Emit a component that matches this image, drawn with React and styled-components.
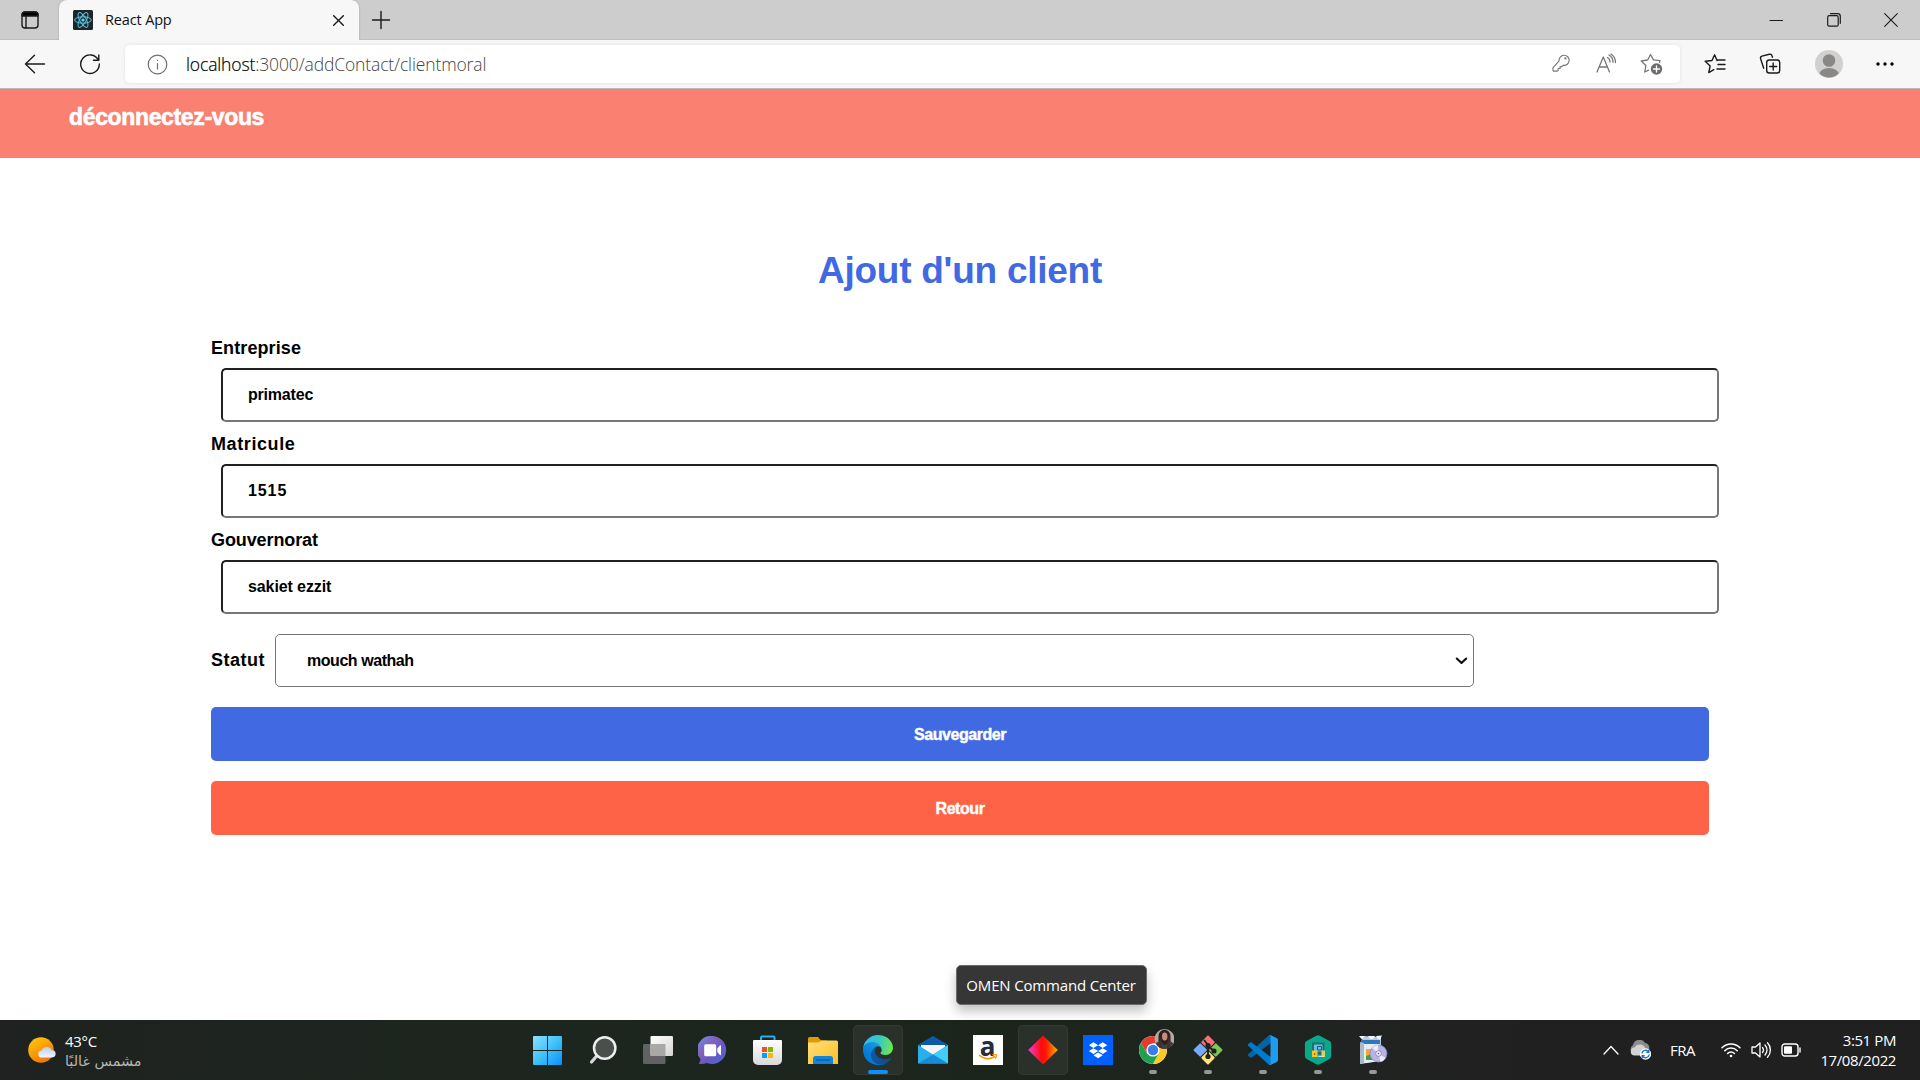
import React from "react";
import styled, { createGlobalStyle } from "styled-components";

const GlobalStyle = createGlobalStyle`
  * { box-sizing: border-box; }
  body { margin: 0; background: #fff; overflow: hidden; }
  svg { display: block; flex: none; }
`;

const ui = `"Open Sans", "Noto Sans", sans-serif`;
const gothic = `"Liberation Sans", Arial, sans-serif`;

const Screen = styled.div`
  width: 1920px;
  height: 1080px;
  display: flex;
  flex-direction: column;
  overflow: hidden;
  font-family: ${ui};
`;

/* ---------- browser chrome ---------- */
const TabStrip = styled.div`
  height: 40px;
  flex: none;
  display: flex;
  background: #cdcdcd;
  box-shadow: inset 0 -1px 0 #bdbdbd;
`;
const TabActions = styled.div`
  width: 59px;
  padding: 11px 0 0 21px;
`;
const Tab = styled.div`
  width: 300px;
  height: 40px;
  display: flex;
  align-items: center;
  padding: 0 15px 0 14px;
  background: #f7f7f7;
  border-radius: 8px 8px 0 0;
  box-shadow: 0 0 2px rgba(0, 0, 0, 0.25);
  clip-path: inset(-2px -2px 0 -2px);
`;
const TabTitle = styled.span`
  flex: 1;
  margin-left: 12px;
  font-size: 14.5px;
  line-height: 20px;
  letter-spacing: -0.15px;
  color: #111;
`;
const NewTab = styled.div`
  flex: 1;
  padding: 10px 0 0 12px;
`;
const WindowButtons = styled.div`
  display: flex;
  align-items: center;
  gap: 43px;
  padding-right: 22px;
`;
const Toolbar = styled.div`
  height: 49px;
  flex: none;
  display: flex;
  align-items: center;
  background: #f7f7f7;
  border-bottom: 1px solid #b9b9b9;
  padding: 0 24px;
`;
const NavButtons = styled.div`
  width: 101px;
  display: flex;
  gap: 33px;
`;
const AddressBar = styled.div`
  width: 1555px;
  height: 38px;
  display: flex;
  align-items: center;
  padding: 0 17px 0 22px;
  background: #fff;
  border-radius: 5px;
  box-shadow: 0 0 4px rgba(0, 0, 0, 0.09);
`;
const Url = styled.span`
  flex: 1;
  margin-left: 18px;
  font-size: 17.5px;
  font-weight: 300;
  letter-spacing: -0.13px;
  line-height: 24px;
  color: #444;
  b { font-weight: 300; color: #000; -webkit-text-stroke: 0.2px #000; }
`;
const AddressActions = styled.div`
  display: flex;
  gap: 23px;
`;
const ToolbarActions = styled.div`
  flex: 1;
  display: flex;
  align-items: center;
  justify-content: space-between;
  padding: 0 2px 0 24px;
`;

/* ---------- page ---------- */
const Page = styled.main`
  flex: 1;
  font-family: ${gothic};
  font-weight: 700;
`;
const NavBar = styled.nav`
  height: 69px;
  padding: 15px 69px;
  background: #fa8072;
`;
const Logout = styled.a`
  display: inline-block;
  font-size: 23px;
  line-height: 26px;
  letter-spacing: -0.35px;
  color: #fff;
  -webkit-text-stroke: 0.6px #fff;
`;
const Form = styled.form`
  width: 1498px;
  margin: 0 auto;
  padding-top: 89px;
`;
const Heading = styled.h1`
  margin: 0 0 31px;
  height: 48px;
  text-align: center;
  font-size: 37px;
  letter-spacing: -0.25px;
  line-height: 48px;
  color: #4169e1;
`;
const Field = styled.div`
  height: 96px;
`;
const Label = styled.label`
  display: block;
  height: 42px;
  padding-top: 12px;
  font-size: 18px;
  line-height: 20px;
  letter-spacing: ${(p) => p.$spacing || 0}px;
  color: #000;
`;
const Input = styled.input`
  display: block;
  width: 1498px;
  height: 54px;
  margin: 0 0 0 10px;
  padding: 0 25px;
  border: 2px inset #767676;
  border-radius: 5px;
  background: #fff;
  font: 700 16px ${gothic};
  letter-spacing: ${(p) => p.$spacing || 0}px;
  color: #000;
`;
const StatusRow = styled.div`
  display: flex;
  align-items: center;
  height: 53px;
  margin: 20px 0;
`;
const StatusLabel = styled.label`
  width: 64px;
  font-size: 18px;
  letter-spacing: 0.5px;
  padding-bottom: 1px;
`;
const SelectBox = styled.div`
  width: 1199px;
  height: 53px;
  display: flex;
  align-items: center;
  padding-right: 5px;
  border: 1px solid #767676;
  border-radius: 5px;
  background: #fff;
`;
const Select = styled.select`
  flex: 1;
  height: 51px;
  padding: 0 0 0 31px;
  border: 0;
  appearance: none;
  background: transparent;
  font: 700 16px ${gothic};
  letter-spacing: -0.45px;
  color: #000;
`;
const Button = styled.button`
  display: block;
  width: 100%;
  height: 54px;
  margin-bottom: 20px;
  padding: 1px 0 0;
  border: 0;
  border-radius: 5px;
  background: ${(p) => p.$color};
  font: 700 16px ${gothic};
  letter-spacing: -0.45px;
  color: #fff;
  -webkit-text-stroke: 0.4px #fff;
`;

/* ---------- taskbar ---------- */
const Taskbar = styled.footer`
  height: 60px;
  flex: none;
  display: flex;
  align-items: center;
  background: linear-gradient(90deg, #1f2220 0%, #1d251f 20%, #1c251c 55%, #202321 70%, #202020 80%);
  color: #fff;
`;
const Weather = styled.div`
  width: 520px;
  display: flex;
  align-items: center;
  padding-left: 28px;
  gap: 9px;
`;
const WeatherText = styled.div`
  display: flex;
  flex-direction: column;
  padding-top: 1px;
  font-size: 15px;
  line-height: 20px;
  letter-spacing: -0.3px;
`;
const Forecast = styled.span`
  font-family: "DejaVu Sans", sans-serif;
  font-size: 14.3px;
  letter-spacing: 0;
  color: #b5b6b5;
`;
const Apps = styled.div`
  display: flex;
  flex: 1;
`;
const AppCell = styled.div`
  position: relative;
  width: 50px;
  height: 50px;
  margin: 0 2.5px;
  display: flex;
  align-items: center;
  justify-content: center;
  border-radius: 5px;
  background: ${(p) => (p.$active ? "#2a312b" : "transparent")};
  box-shadow: ${(p) => (p.$active ? "inset 0 0 0 1px #343b35" : "none")};
`;
const Indicator = styled.span`
  position: absolute;
  bottom: 1px;
  left: ${(p) => (p.$wide ? 15 : 21)}px;
  width: ${(p) => (p.$wide ? 20 : 8)}px;
  height: 4px;
  border-radius: 2px;
  background: ${(p) => (p.$wide ? "#0a91fb" : "#969896")};
`;
const Tooltip = styled.div`
  position: absolute;
  left: -62px;
  bottom: 70px;
  width: 191px;
  height: 40px;
  display: flex;
  align-items: center;
  justify-content: center;
  padding-bottom: 1px;
  background: #363636;
  border: 1px solid #6b6b6b;
  border-radius: 5px;
  box-shadow: 0 6px 12px rgba(0, 0, 0, 0.25);
  font-size: 15px;
  white-space: nowrap;
  letter-spacing: -0.17px;
`;
const Tray = styled.div`
  display: flex;
  align-items: center;
  padding-right: 24px;
  font-size: 15px;
`;
const Language = styled.span`
  width: 51px;
  margin-left: 19px;
  letter-spacing: -0.5px;
`;
const StatusIcons = styled.div`
  display: flex;
  align-items: center;
  gap: 10px;
`;
const Clock = styled.div`
  width: 95px;
  display: flex;
  flex-direction: column;
  align-items: flex-end;
  line-height: 20px;
  letter-spacing: -0.4px;
`;

const Stroke = ({ w = 20, h = w, box, color = "#1b1b1b", sw = 1.4, children }) => (
  <svg width={w} height={h} viewBox={box || `0 0 ${w} ${h}`} fill="none" stroke={color} strokeWidth={sw} strokeLinecap="round" strokeLinejoin="round">
    {children}
  </svg>
);

const TabActionsIcon = () => (
  <Stroke w={18} sw={1.4}>
    <rect x="1" y="1" width="16" height="16" rx="3" />
    <path d="M5 5v12" />
    <path d="M1 5V4a3 3 0 0 1 3-3h10a3 3 0 0 1 3 3v1z" fill="#000" />
  </Stroke>
);
const ReactIcon = () => (
  <svg width="20" height="20" viewBox="0 0 20 20" fill="none" stroke="#56c8e2" strokeWidth="1">
    <rect width="20" height="20" rx="1.5" fill="#20232a" stroke="none" />
    <ellipse cx="10" cy="10" rx="8.3" ry="3.2" />
    <ellipse cx="10" cy="10" rx="8.3" ry="3.2" transform="rotate(60 10 10)" />
    <ellipse cx="10" cy="10" rx="8.3" ry="3.2" transform="rotate(120 10 10)" />
    <circle cx="10" cy="10" r="1.6" fill="#61dafb" stroke="none" />
  </svg>
);

const WindowsIcon = () => (
  <svg width="29" height="29" viewBox="0 0 29 29">
    <defs>
      <linearGradient id="win" x1="0" y1="0" x2="29" y2="29" gradientUnits="userSpaceOnUse">
        <stop stopColor="#8be0ff" /><stop offset=".5" stopColor="#3fc2fb" /><stop offset="1" stopColor="#0c8ff5" />
      </linearGradient>
    </defs>
    <path fill="url(#win)" d="M1 0h13v14H0V1a1 1 0 0 1 1-1zM15 0h13a1 1 0 0 1 1 1v13H15zM0 15h14v14H1a1 1 0 0 1-1-1zM15 15h14v13a1 1 0 0 1-1 1H15z" />
  </svg>
);
const SearchIcon = () => (
  <svg width="28" height="29" viewBox="0 0 28 29" fill="none">
    <path d="M8.5 19L2.5 26" stroke="#d6d9de" strokeWidth="3.2" strokeLinecap="round" />
    <circle cx="15.7" cy="12" r="10.7" fill="#4b4f4c" stroke="#eceef0" strokeWidth="2.5" />
  </svg>
);
const TaskViewIcon = () => (
  <svg width="30" height="28" viewBox="0 0 30 28">
    <defs>
      <linearGradient id="tv" x1="0" y1="0" x2="1" y2="1"><stop stopColor="#fff" /><stop offset="1" stopColor="#d5d5d5" /></linearGradient>
    </defs>
    <rect y="8" width="22.5" height="20" rx="1.2" fill="#626163" />
    <rect x="7.5" y="0" width="22.5" height="20" rx="1.2" fill="url(#tv)" />
    <path d="M7.5 8h15v12h-14a1 1 0 0 1-1-1z" fill="#a8a8a6" />
  </svg>
);
const ChatIcon = () => (
  <svg width="29" height="29" viewBox="0 0 29 29">
    <defs>
      <linearGradient id="chat" x1="2" y1="4" x2="24" y2="26" gradientUnits="userSpaceOnUse"><stop stopColor="#7183dc" /><stop offset=".3" stopColor="#8462bb" /><stop offset=".6" stopColor="#6a59c2" /><stop offset="1" stopColor="#5562d0" /></linearGradient>
    </defs>
    <path d="M14.5 0A14 14 0 1 1 9 27c-3 1-6 1-8.400.8 1.300-1.500 1.900-3 1.700-5A14 14 0 0 1 14.500 0z" fill="url(#chat)" />
    <rect x="6.200" y="8.200" width="12" height="12" rx="1.500" fill="#fff" />
    <path d="M19.300 12.500l2.700-3c.6-.5 1-.4 1 .4v8.600c0 .8-.4.9-1 .4l-2.700-3z" fill="#fff" />
  </svg>
);
const StoreIcon = () => (
  <svg width="29" height="30" viewBox="0 0 29 30">
    <defs><linearGradient id="store" x1="0" y1="0" x2="0" y2="1"><stop stopColor="#fff" /><stop offset="1" stopColor="#d9d9d9" /></linearGradient></defs>
    <path d="M8 6.500V2.500a1 1 0 0 1 1-1h11.500a1 1 0 0 1 1 1v4" fill="none" stroke="#1cb5ea" strokeWidth="2" />
    <path d="M1 5h27a1 1 0 0 1 1 1v19a5 5 0 0 1-5 5H5a5 5 0 0 1-5-5V6a1 1 0 0 1 1-1z" fill="url(#store)" />
    <path d="M9 12h5v5H9z" fill="#f25022" /><path d="M15 12h5v5h-5z" fill="#7fba00" />
    <path d="M9 18h5v5H9z" fill="#00a4ef" /><path d="M15 18h5v5h-5z" fill="#ffb900" />
  </svg>
);
const ExplorerIcon = () => (
  <svg width="30" height="27" viewBox="0 0 30 27">
    <defs>
      <linearGradient id="fold" x1="0" y1="0" x2="1" y2="1"><stop stopColor="#ffe07a" /><stop offset="1" stopColor="#fbbf24" /></linearGradient>
    </defs>
    <path d="M0 1.500A1.500 1.500 0 0 1 1.500 0H10l3 3.500h6V10H0z" fill="#dd9b05" />
    <path d="M0 5.500h11l2-2h15.500A1.500 1.500 0 0 1 30 5v22H0z" fill="url(#fold)" />
    <path d="M5 27v-5.500a2.500 2.500 0 0 1 2.500-2.500h15a2.500 2.500 0 0 1 2.500 2.500V27z" fill="#1584d8" />
    <path d="M8 23h14" stroke="#0a5da6" strokeWidth="1.300" />
  </svg>
);
const EdgeIcon = () => (
  <svg width="30" height="30" viewBox="0 0 256 256">
    <defs>
      <linearGradient id="e1" x1="63" y1="177" x2="241" y2="177" gradientUnits="userSpaceOnUse"><stop stopColor="#0c59a4" /><stop offset="1" stopColor="#114a8b" /></linearGradient>
      <linearGradient id="e2" x1="157" y1="99" x2="46" y2="221" gradientUnits="userSpaceOnUse"><stop stopColor="#1b9de2" /><stop offset=".16" stopColor="#1595df" /><stop offset=".67" stopColor="#0680d7" /><stop offset="1" stopColor="#0078d4" /></linearGradient>
      <linearGradient id="e3" x1="10" y1="60" x2="240" y2="110" gradientUnits="userSpaceOnUse"><stop stopColor="#35b9ee" /><stop offset=".5" stopColor="#36c6c9" /><stop offset="1" stopColor="#68e653" /></linearGradient>
    </defs>
    <path fill="url(#e1)" d="M235.700 195.500a93.700 93.700 0 0 1-10.600 4.700 101.900 101.900 0 0 1-35.900 6.400c-47.300 0-88.500-32.500-88.500-74.300a31.500 31.500 0 0 1 16.400-27.300c-42.800 1.800-53.800 46.400-53.800 72.500 0 74 68.100 81.400 82.800 81.400 7.900 0 19.800-2.300 27-4.600l1.300-.4a128.300 128.300 0 0 0 66.600-52.800 4 4 0 0 0-5.300-5.600z" />
    <path fill="url(#e2)" d="M105.700 241.400a79.200 79.200 0 0 1-22.700-21.300 80.700 80.700 0 0 1 29.500-120c3.200-1.500 8.500-4.100 15.600-4a32.400 32.400 0 0 1 25.700 13 31.900 31.900 0 0 1 6.300 18.700c0-.2 24.500-79.600-80-79.600-43.900 0-80 41.700-80 78.200a130.200 130.200 0 0 0 12.100 56 128 128 0 0 0 156.400 67 75.500 75.500 0 0 1-62.800-8z" />
    <path fill="url(#e3)" d="M152.300 148.900c-.9 1-3.400 2.500-3.400 5.600 0 2.600 1.700 5.100 4.700 7.200 14.300 10 41.400 8.600 41.500 8.600a59.600 59.600 0 0 0 30.300-8.300 61.400 61.400 0 0 0 30.400-52.900c.3-22.400-8-37.300-11.300-43.900C223.500 23.900 177.700 0 128 0A128 128 0 0 0 0 126.200c.5-36.500 36.800-66 80-66 3.500 0 23.500.3 42 10.100 16.300 8.600 24.900 18.900 30.800 29.200 6.200 10.700 7.300 24.100 7.300 29.500s-2.700 13.300-7.800 19.900z" />
  </svg>
);
const MailIcon = () => (
  <svg width="30" height="28" viewBox="0 0 30 28">
    <path d="M15 0L29.500 8.500 30 12H0l.5-3.500z" fill="#0a5ca8" />
    <path d="M3 9h24v11H3z" fill="#f5f5f5" />
    <path d="M0 9l15 9.500L30 9v17.500a1 1 0 0 1-1 1H1a1 1 0 0 1-1-1z" fill="#28b0ec" />
    <path d="M30 9v18.500L15 18.500z" fill="#42ccf6" />
    <path d="M0 27.500l15-9 15 9z" fill="#198cd8" />
  </svg>
);
const AmazonTile = styled.div`
  width: 30px;
  height: 30px;
  display: flex;
  flex-direction: column;
  align-items: center;
  justify-content: flex-end;
  padding-bottom: 4px;
  background: #fff;
`;
const AmazonGlyph = styled.span`
  margin-bottom: -9px;
  font: 700 26px/34px "Open Sans", sans-serif;
  color: #232f3e;
`;
const AmazonIcon = () => (
  <AmazonTile>
    <AmazonGlyph>a</AmazonGlyph>
    <svg width="20" height="7" viewBox="0 0 20 7" fill="none" stroke="#ff9900" strokeWidth="1.500">
      <path d="M1 1c5 4.300 11 4.500 16 1.500M14.500.8c2-.5 3.500-.3 3.700 0s0 2-1 3.500" />
    </svg>
  </AmazonTile>
);
const OmenIcon = () => (
  <svg width="30" height="30" viewBox="0 0 30 30">
    <defs><linearGradient id="omen"><stop stopColor="#f63fd0" /><stop offset=".45" stopColor="#ff0a0a" /><stop offset=".6" stopColor="#ff1a00" /><stop offset="1" stopColor="#ffb000" /></linearGradient></defs>
    <path d="M15 .5L29.800 15 15 29.500.2 15z" fill="url(#omen)" />
  </svg>
);
const DropboxIcon = () => (
  <svg width="30" height="30" viewBox="0 0 30 30">
    <path fill="#0061ff" d="M0 0h30v30H0z" />
    <path fill="#fff" d="M10.500 7.300l4.600 2.900-4.600 2.900-4.600-2.900zM19.700 7.300l4.600 2.900-4.600 2.900-4.600-2.900zM10.500 13.200l4.600 2.900-4.600 2.900-4.600-2.900zM19.700 13.200l4.600 2.900-4.600 2.900-4.600-2.900zM15.100 17.400l4.600 2.900-4.600 2.900-4.600-2.900z" />
  </svg>
);
const ChromeIcon = () => (
  <svg width="42" height="42" viewBox="0 0 42 42">
    <defs><clipPath id="face"><circle cx="32.500" cy="10" r="10" /></clipPath></defs>
    <g transform="translate(21 21)">
      <circle r="14" fill="#fff" />
      <path d="M0-6.800H12.200A14 14 0 0 0-12.100-7L-5.900 3.400 0-6.800z" fill="#e33b2e" />
      <path d="M-5.900 3.400L-12.100-7A14 14 0 0 0 0 14L5.900 3.400z" fill="#1fa04c" />
      <path d="M5.900 3.400L0 14A14 14 0 0 0 12.200-6.800H0z" fill="#fdc921" />
      <circle r="6.600" fill="#fff" /><circle r="5.200" fill="#3b7ded" />
    </g>
    <g clipPath="url(#face)">
      <g transform="translate(6.500 -.5)">
        <path fill="#b3aaa6" d="M15 0h22v22H15z" />
        <path fill="#31211e" d="M20 22V8c0-9 12-9 12 0v14z" />
        <path fill="#3b4148" d="M15 22c0-7 4-9 7-9l4 4 6-4c3 1 4 4 5 9z" />
        <path fill="#4a2d26" d="M21.500 8l3 13h-4zM30 8l2 11-4 2z" />
        <ellipse cx="26.200" cy="8" rx="2.700" ry="3.900" fill="#c28f7c" />
      </g>
    </g>
  </svg>
);
const GitIcon = () => (
  <svg width="30" height="30" viewBox="0 0 30 30">
    <g transform="rotate(45 15 15)">
      <rect x="4.500" y="4.500" width="10" height="10" rx="1" fill="#f47373" />
      <rect x="15.500" y="4.500" width="10" height="10" rx="1" fill="#80c655" />
      <rect x="4.500" y="15.500" width="10" height="10" rx="1" fill="#76a9fb" />
      <rect x="15.500" y="15.500" width="10" height="10" rx="1" fill="#fce27a" />
    </g>
    <path d="M11 5l4 5v12M15 11l6 5" stroke="#1f201f" strokeWidth="1.900" fill="none" />
    <g fill="#1f201f"><circle cx="15" cy="10.500" r="2.600" /><circle cx="21" cy="16" r="2.600" /><circle cx="15" cy="21.500" r="2.600" /></g>
  </svg>
);
const VsCodeIcon = () => (
  <svg width="30" height="30" viewBox="0 0 100 100">
    <path d="M96.500 10.600L75.900.8a6.200 6.200 0 0 0-7.100 1.200L1.300 63.500a4.200 4.200 0 0 0 0 6.200l5.500 5a4.200 4.200 0 0 0 5.400.2L93.400 13.300a4.100 4.100 0 0 1 6.600 3.300v-.3a6.300 6.300 0 0 0-3.500-5.700z" fill="#0065a9" />
    <path d="M96.500 89.400l-20.600 9.900a6.200 6.200 0 0 1-7.100-1.200L1.300 36.500a4.200 4.200 0 0 1 0-6.200l5.500-5a4.200 4.200 0 0 1 5.400-.2l81.200 61.600a4.100 4.100 0 0 0 6.600-3.300v.3a6.300 6.300 0 0 1-3.500 5.700z" fill="#007acc" />
    <path d="M75.900 99.300a6.200 6.200 0 0 1-7.100-1.200c2.300 2.300 6.200.7 6.200-2.600V4.600c0-3.300-3.900-4.900-6.200-2.600A6.200 6.200 0 0 1 75.900.7l20.600 9.900a6.200 6.200 0 0 1 3.500 5.700v67.400a6.200 6.200 0 0 1-3.500 5.700z" fill="#1f9cf0" />
  </svg>
);
const VaultIcon = () => (
  <svg width="28" height="30" viewBox="0 0 28 30">
    <path d="M12.300.8a4 4 0 0 1 3.500 0l9.700 5.300a3 3 0 0 1 1.700 2.700v12.400a3 3 0 0 1-1.700 2.700l-9.700 5.300a4 4 0 0 1-3.500 0l-9.700-5.300a3 3 0 0 1-1.700-2.700V8.800a3 3 0 0 1 1.700-2.700z" fill="#08a88a" />
    <path d="M8 7.500h12.500v12H8z" fill="#2a6970" /><path d="M10 9.500h8.500v7H10z" fill="#5cc1e4" />
    <path d="M13.500 11.500h4v3.500h-4z" fill="none" stroke="#225c6c" />
    <path d="M17.500 15.500h3.500v6.500h-3.500z" fill="#e5cd5e" />
    <rect x="8" y="15.500" width="5.500" height="6.500" fill="#ffc229" /><path d="M10.700 18v2" stroke="#7a5510" />
    <path d="M14 21.300h6" stroke="#d8eaf0" />
  </svg>
);
const InstallerIcon = () => (
  <svg width="30" height="30" viewBox="0 0 30 30">
    <path d="M4 1l19 1v24L6 28z" fill="#b9cbe0" />
    <path d="M4 4.500L1 1h6zM12 4l-2-3h7l-2 3zM20 4l-2-3 6-.5-2 4z" fill="#f2f6fa" />
    <path d="M3 5h19v4H3z" fill="#2e78ba" /><path d="M3 9h19v17L2 29z" fill="#e4edf5" />
    <path d="M2 7l4 1v20l-4 1z" fill="#aab9c8" />
    <path d="M8 14h8v11H8z" fill="#43a047" /><path d="M8 14h8v4l-8 3z" fill="#f4a83b" />
    <circle cx="20.500" cy="18.500" r="8.500" fill="#b8b3e6" stroke="#8680c4" strokeWidth=".7" />
    <path d="M20.500 18.500L14 13a8.500 8.500 0 0 1 6-3zM20.500 18.500l7 4.500a8.500 8.500 0 0 1-5 4z" fill="#eeeafe" />
    <circle cx="20.500" cy="18.500" r="2.800" fill="#fff" stroke="#8682b8" /><circle cx="20.500" cy="18.500" r="1" fill="#77739b" />
  </svg>
);

const apps = [
  { id: "start", Icon: WindowsIcon },
  { id: "search", Icon: SearchIcon },
  { id: "taskview", Icon: TaskViewIcon },
  { id: "chat", Icon: ChatIcon },
  { id: "store", Icon: StoreIcon },
  { id: "explorer", Icon: ExplorerIcon },
  { id: "edge", Icon: EdgeIcon, active: true, running: "wide" },
  { id: "mail", Icon: MailIcon },
  { id: "amazon", Icon: AmazonIcon },
  { id: "omen", Icon: OmenIcon, active: true, tip: "OMEN Command Center" },
  { id: "dropbox", Icon: DropboxIcon },
  { id: "chrome", Icon: ChromeIcon, running: "dot" },
  { id: "git", Icon: GitIcon, running: "dot" },
  { id: "vscode", Icon: VsCodeIcon, running: "dot" },
  { id: "vault", Icon: VaultIcon, running: "dot" },
  { id: "installer", Icon: InstallerIcon, running: "dot" },
];

const WeatherIcon = () => (
  <svg width="28" height="27" viewBox="0 0 28 27">
    <defs>
      <linearGradient id="sun" x1="0" y1="0" x2=".6" y2="1"><stop stopColor="#ffcf0a" /><stop offset="1" stopColor="#f17509" /></linearGradient>
      <linearGradient id="cloud" x1="0" y1="0" x2="0" y2="1"><stop stopColor="#b9cdf2" /><stop offset="1" stopColor="#f1f5fd" /></linearGradient>
    </defs>
    <circle cx="13" cy="13" r="12.800" fill="url(#sun)" />
    <path d="M14 20.500a3.500 3.500 0 0 1-.3-7 5.400 5.400 0 0 1 10-.2 3.600 3.600 0 0 1 .6 7.200z" fill="url(#cloud)" />
  </svg>
);

const fields = [
  { label: "Entreprise", value: "primatec", ls: 0.1, vs: -0.2 },
  { label: "Matricule", value: "1515", ls: 0.6, vs: 0.9 },
  { label: "Gouvernorat", value: "sakiet ezzit", ls: -0.1, vs: -0.1 },
];

export default function App() {
  return (
    <Screen>
      <GlobalStyle />
      <TabStrip>
        <TabActions><TabActionsIcon /></TabActions>
        <Tab>
          <ReactIcon />
          <TabTitle>React App</TabTitle>
          <Stroke w={11}><path d="M.7.700l9.600 9.600M10.300.700L.7 10.300" /></Stroke>
        </Tab>
        <NewTab><Stroke w={20}><path d="M10 1.500v17M1.500 10h17" /></Stroke></NewTab>
        <WindowButtons>
          <Stroke w={15} sw={1.200}><path d="M1 7.500h12.500" /></Stroke>
          <Stroke w={14} sw={1.200}><rect x=".7" y="2.700" width="10.500" height="10.500" rx="1.500" /><path d="M3.500.700h7.200a2.600 2.600 0 0 1 2.600 2.600v7" /></Stroke>
          <Stroke w={14} sw={1.100}><path d="M.7.700l12.600 12.600M13.300.700L.7 13.300" /></Stroke>
        </WindowButtons>
      </TabStrip>
      <Toolbar>
        <NavButtons>
          <Stroke w={22}><path d="M1.500 11h19M10.500 2.200L1.500 11l9 8.800" /></Stroke>
          <Stroke w={22}><path d="M19.300 7A9.300 9.300 0 1 0 20.300 11M19.800 2v5.300h-5.300" /></Stroke>
        </NavButtons>
        <AddressBar>
          <Stroke w={21} color="#6f6f6f" sw={1.200}><circle cx="10.500" cy="10.500" r="9.300" /><path d="M10.500 9.500v5.500M10.500 6.300v.2" /></Stroke>
          <Url><b>localhost</b>:3000/addContact/clientmoral</Url>
          <AddressActions>
            <Stroke w={20} box="-.5 -.3 21 21" color="#777" sw={1.200}>
              <path d="M8 8a5.300 5.300 0 1 1 4.500 4.600L10.800 14H9v2H7v2l-1 .8H2.200L1.500 18v-2.800z" /><circle cx="14.600" cy="5.400" r=".6" />
            </Stroke>
            <Stroke w={22} box="-1 0 22 22" color="#777" sw={1.300}>
              <path d="M2 19L8.300 4 14.500 19M4.300 14h8M12.500 4.500c1.500.8 2.500 2.500 2.500 4.500M14 2c2.700 1.400 4 4 4 7.300M16 1c2.800 1.800 4.500 5 4.500 8.500" />
            </Stroke>
            <Stroke w={24} h={22} color="#777" sw={1.300}>
              <path d="M20.500 9.500l.5-1.800-6.500-.8L11.500 1.500 8.700 7l-6.500 1 4.700 4.500-1.200 6.500 3.800-1.800" />
              <circle cx="17.500" cy="16" r="5.700" fill="#6d6d6d" stroke="none" /><path d="M17.500 13v6M14.500 16h6" stroke="#fff" />
            </Stroke>
          </AddressActions>
        </AddressBar>
        <ToolbarActions>
          <Stroke w={22}>
            <path d="M13 7.500L10.600 1.800 8 7.500l-6.800.8 4.900 4.700-1.300 6.600 5-2.900M13 7h8M14 11.500h7M13 16h8" />
          </Stroke>
          <Stroke w={22}>
            <rect x="7.700" y="7" width="13" height="13" rx="2.500" /><path d="M14.200 10v7M10.700 13.500h7M4.700 15.200L1.600 5.800a2.200 2.200 0 0 1 1.400-2.700l7.200-1.800A2.200 2.200 0 0 1 13 2.800l.5 1.400" />
          </Stroke>
          <svg width="28" height="28" viewBox="0 0 28 28">
            <defs><clipPath id="profile"><circle cx="14" cy="14" r="13.500" /></clipPath></defs>
            <circle cx="14" cy="14" r="14" fill="#d2d0ce" />
            <circle cx="14" cy="10.500" r="6.300" fill="#8a8886" />
            <ellipse cx="14" cy="25" rx="10" ry="7" fill="#8a8886" clipPath="url(#profile)" />
          </svg>
          <svg width="18" height="4" viewBox="0 0 18 4"><circle cx="2" cy="2" r="1.700" /><circle cx="9" cy="2" r="1.700" /><circle cx="16" cy="2" r="1.700" /></svg>
        </ToolbarActions>
      </Toolbar>

      <Page>
        <NavBar><Logout>déconnectez-vous</Logout></NavBar>
        <Form>
          <Heading>Ajout d'un client</Heading>
          {fields.map((f) => (
            <Field key={f.label}>
              <Label $spacing={f.ls}>{f.label}</Label>
              <Input $spacing={f.vs} value={f.value} readOnly />
            </Field>
          ))}
          <StatusRow>
            <StatusLabel>Statut</StatusLabel>
            <SelectBox>
              <Select defaultValue="mouch wathah"><option>mouch wathah</option></Select>
              <Stroke w={13} h={8} color="#101010" sw={2.1}><path d="M1.800 1.500l4.700 4.500 4.700-4.500" /></Stroke>
            </SelectBox>
          </StatusRow>
          <Button type="button" $color="#4169e1">Sauvegarder</Button>
          <Button type="button" $color="#ff6347">Retour</Button>
        </Form>
      </Page>

      <Taskbar>
        <Weather>
          <WeatherIcon />
          <WeatherText>
            <span>43°C</span>
            <Forecast dir="rtl">مشمس غالبًا</Forecast>
          </WeatherText>
        </Weather>
        <Apps>
          {apps.map(({ id, Icon, active, running, tip }) => (
            <AppCell key={id} $active={active}>
              <Icon />
              {running && <Indicator $wide={running === "wide"} />}
              {tip && <Tooltip>{tip}</Tooltip>}
            </AppCell>
          ))}
        </Apps>
        <Tray>
          <Stroke w={16} h={10} color="#fff" sw={1.300}><path d="M1 9l7-7.500L15 9" /></Stroke>
          <svg width="32" height="20" viewBox="0 0 32 20">
            <path d="M18 14a5 5 0 0 1-4-9 6.500 6.500 0 0 1 12-2c4 .5 5 4 4 8z" fill="#8c8c8c" />
            <path d="M16 15.500a4 4 0 0 1-.5-8 6 6 0 0 1 10.500 0v8z" fill="#d2d2d2" />
            <circle cx="26.500" cy="14" r="5.700" fill="#fff" />
            <path d="M22.800 13.500a3.800 3.800 0 0 1 6.800-1.700M30.200 14.500a3.800 3.800 0 0 1-6.800 1.700M29.800 9.800v2.500h-2.500M23.200 18.200v-2.500h2.500" fill="none" stroke="#1572c4" strokeWidth="1.300" />
          </svg>
          <Language>FRA</Language>
          <StatusIcons>
            <Stroke w={20} h={16} color="#fff" sw={1.500}>
              <path d="M1 5.800a12.600 12.600 0 0 1 18 0M3.800 8.700a8.700 8.700 0 0 1 12.400 0M6.600 11.500a4.800 4.800 0 0 1 6.800 0" />
              <circle cx="10" cy="14" r="1.300" fill="#fff" stroke="none" />
            </Stroke>
            <Stroke w={20} h={18} color="#fff" sw={1.300}>
              <path d="M1 6h3.500L9 2v14l-4.500-4H1zM11.500 6.500a4 4 0 0 1 0 5M14 4a7.300 7.300 0 0 1 0 10M16.500 1.800a10.500 10.500 0 0 1 0 14.400" />
            </Stroke>
            <Stroke w={20} h={14} color="#fff" sw={1.400}>
              <rect x="1" y="1" width="16" height="12" rx="2.800" /><path d="M19 5v4" />
              <rect x="3" y="3.200" width="8" height="7.600" rx="1" fill="#fff" stroke="none" />
            </Stroke>
          </StatusIcons>
          <Clock><span>3:51 PM</span><span>17/08/2022</span></Clock>
        </Tray>
      </Taskbar>
    </Screen>
  );
}
